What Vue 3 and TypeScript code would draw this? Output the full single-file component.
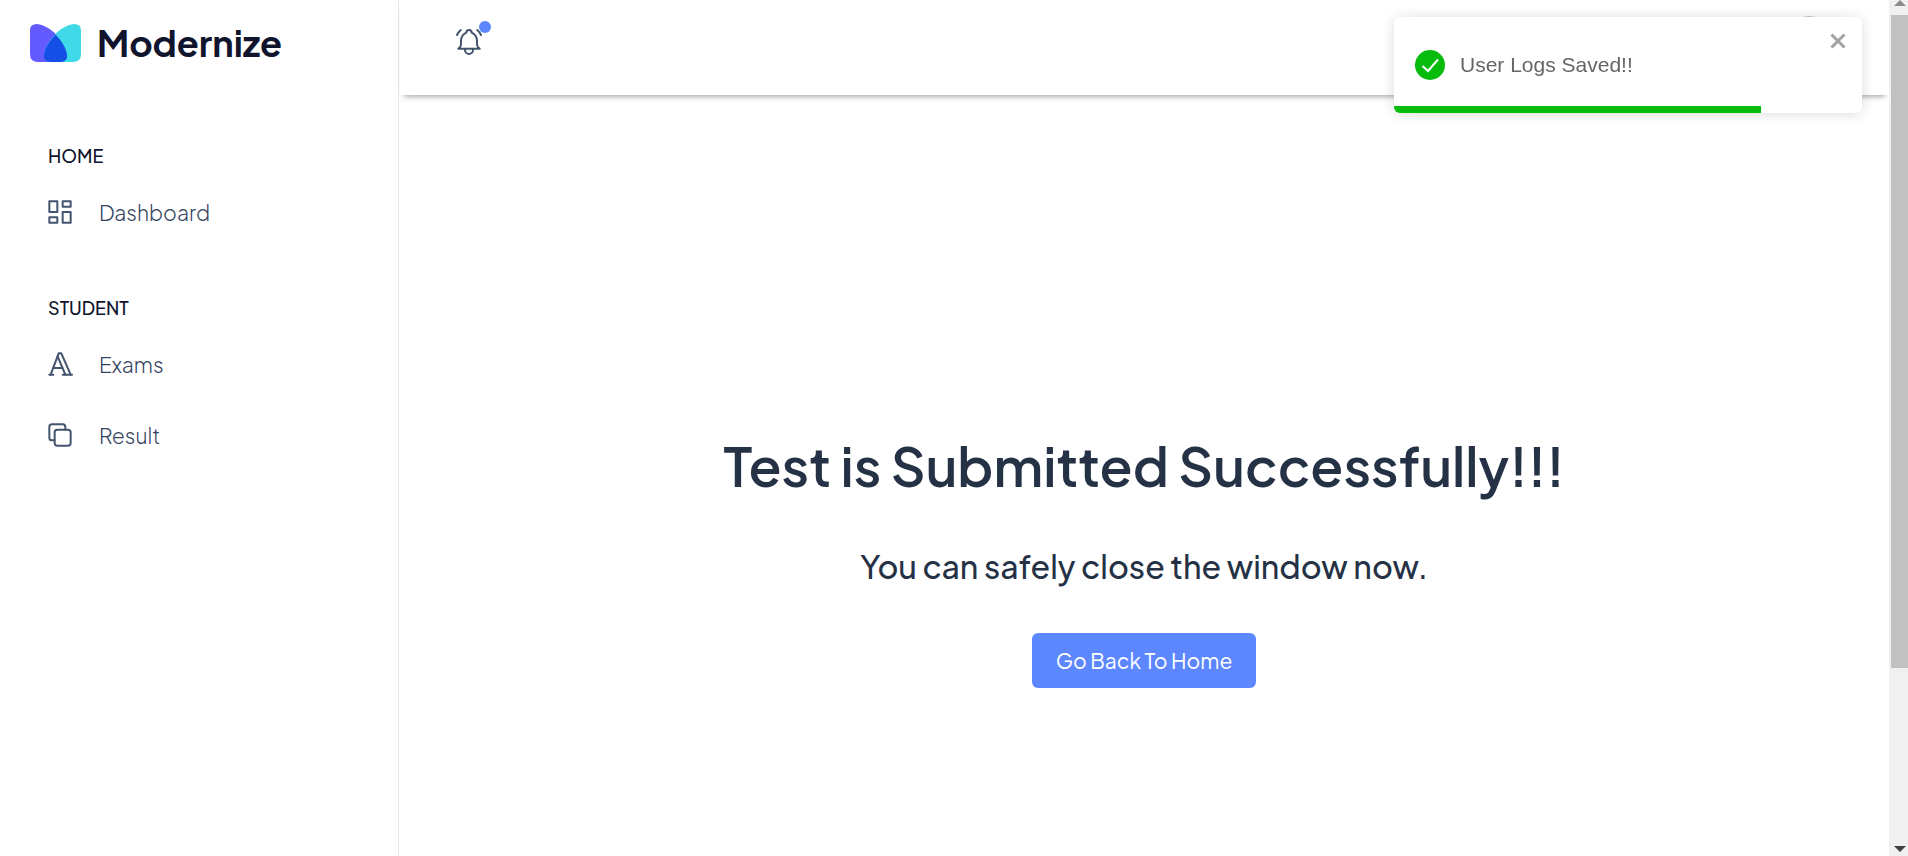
<script setup lang="ts">
import { ref } from 'vue'

interface NavItem {
  label: string
  paths: string[]
}

interface NavGroup {
  title: string
  items: NavItem[]
}

const groups: NavGroup[] = [
  {
    title: 'HOME',
    items: [
      {
        label: 'Dashboard',
        paths: ['M4 4h6v8h-6z', 'M4 16h6v4h-6z', 'M14 12h6v8h-6z', 'M14 4h6v4h-6z'],
      },
    ],
  },
  {
    title: 'STUDENT',
    items: [
      {
        label: 'Exams',
        paths: ['M4 20h3', 'M14 20h7', 'M6.9 15h6.9', 'M10.2 6.3l5.8 13.7', 'M5 20l6 -16h2l7 16'],
      },
      {
        label: 'Result',
        paths: [
          'M10 8h8a2 2 0 0 1 2 2v8a2 2 0 0 1 -2 2h-8a2 2 0 0 1 -2 -2v-8a2 2 0 0 1 2 -2z',
          'M16 8v-2a2 2 0 0 0 -2 -2h-8a2 2 0 0 0 -2 2v8a2 2 0 0 0 2 2h2',
        ],
      },
    ],
  },
]

const toastOpen = ref(true)
const toastProgress = ref(78.4)
</script>

<template>
  <div class="shell">
    <aside class="sidebar">
      <a href="#" class="brand">
        <svg class="brand-mark" viewBox="0 0 51 38" aria-hidden="true">
          <path d="M0 6Q0 0 7 0C22 2 34 17 37 30Q38 38 30 38H8Q0 38 0 30Z" fill="#635bff" />
          <path d="M51 6Q51 0 44 0C29 2 17 17 14 30Q13 38 21 38H43Q51 38 51 30Z" fill="#3fd9e8" />
          <path d="M25.500 10.500C31 16 35.500 23 37 30Q38 38 30 38H21Q13 38 14 30C15.500 23 20 16 25.500 10.500Z" fill="#154fe6" />
        </svg>
        <span class="brand-name">Modernize</span>
      </a>
      <nav class="nav">
        <section v-for="group in groups" :key="group.title" class="group">
          <h2 class="group-title">{{ group.title }}</h2>
          <a v-for="item in group.items" :key="item.label" href="#" class="nav-link">
            <svg class="icon" viewBox="0 0 24 24" aria-hidden="true">
              <path v-for="d in item.paths" :key="d" :d="d" />
            </svg>
            <span>{{ item.label }}</span>
          </a>
        </section>
      </nav>
    </aside>

    <div class="page">
      <header class="topbar">
        <button type="button" class="bell" aria-label="Notifications">
          <svg class="icon" viewBox="0 0 24 24" aria-hidden="true">
            <path d="M10 5a2 2 0 0 1 4 0a7 7 0 0 1 4 6v3a4 4 0 0 0 2 3h-16a4 4 0 0 0 2 -3v-3a7 7 0 0 1 4 -6" />
            <path d="M9 17v1a3 3 0 0 0 6 0v-1" />
            <path d="M21 6.727a11.050 11.050 0 0 0 -2.794 -3.727" />
            <path d="M3 6.727a11.050 11.050 0 0 1 2.792 -3.727" />
          </svg>
          <span class="badge"></span>
        </button>
        <button type="button" class="avatar" aria-label="Account"></button>
      </header>
      <main class="content">
        <h1 class="title">Test is Submitted Successfully!!!</h1>
        <p class="subtitle">You can safely close the window now.</p>
        <button type="button" class="primary">Go Back To Home</button>
      </main>
    </div>

    <div class="scrollbar" aria-hidden="true">
      <svg class="arrow arrow-up" viewBox="0 0 12 6"><path d="M0 6L6 0L12 6Z" /></svg>
      <div class="thumb"></div>
      <div class="track"></div>
      <svg class="arrow arrow-down" viewBox="0 0 12 6"><path d="M0 0L6 6L12 0Z" /></svg>
    </div>

    <div v-if="toastOpen" class="toast" role="alert">
      <div class="toast-body">
        <svg class="toast-icon" viewBox="0 0 30 30" aria-hidden="true">
          <circle cx="15" cy="15" r="15" fill="#07bc0c" />
          <path d="M7.500 16L13 21L23 9.500" fill="none" stroke="#fff" stroke-width="2" />
        </svg>
        <span>User Logs Saved!!</span>
      </div>
      <button type="button" class="toast-close" aria-label="Close" @click="toastOpen = false">
        <svg viewBox="0 0 16 16" aria-hidden="true">
          <path d="M1.500 1.500L14.500 14.500M14.500 1.500L1.500 14.500" fill="none" stroke="#a3a3a3" stroke-width="3" />
        </svg>
      </button>
      <div class="toast-progress" :style="{ width: toastProgress + '%' }"></div>
    </div>
  </div>
</template>

<style>
body {
  margin: 0;
  background: #fff;
}
</style>

<style scoped>
.shell {
  display: grid;
  grid-template-columns: 399px minmax(0, 1fr) 19px;
  min-height: 100vh;
  background: #fff;
  color: #253246;
  font-family: "Plus Jakarta Sans", Inter, "Liberation Sans", sans-serif;
}

.shell * {
  box-sizing: border-box;
}

button {
  border: 0;
  padding: 0;
  background: none;
  font: inherit;
  cursor: pointer;
}

a {
  color: inherit;
  text-decoration: none;
}

.sidebar {
  border-right: 1px solid #e5eaef;
}

.brand {
  display: flex;
  align-items: center;
  gap: 16px;
  padding: 19px 30px 0;
}

.brand-mark {
  width: 51px;
  height: 38px;
}

.brand-name {
  color: #11142d;
  font-size: 36px;
  font-weight: 700;
  line-height: 48px;
}

.nav {
  padding: 73px 44px 0;
}

.group {
  margin-bottom: 52px;
}

.group-title {
  margin: 0 0 12px;
  padding-left: 4px;
  color: #11142d;
  font-size: 18px;
  font-weight: 500;
  line-height: 32px;
}

.nav-link {
  display: flex;
  align-items: center;
  gap: 23px;
  height: 56px;
  color: #34445f;
  font-size: 21px;
  font-weight: 300;
}

.nav-link + .nav-link {
  margin-top: 15px;
}

.icon {
  display: block;
  width: 32px;
  height: 32px;
  fill: none;
  stroke: #44546e;
  stroke-width: 1.5;
  stroke-linecap: round;
  stroke-linejoin: round;
}

.page {
  display: flex;
  flex-direction: column;
}

.topbar {
  display: flex;
  align-items: center;
  justify-content: space-between;
  height: 95px;
  margin-left: 1px;
  padding: 0 57px 11px 53px;
  background: #fff;
  box-shadow: 0 5px 6px -4px rgba(0, 0, 0, 0.42);
}

.bell {
  position: relative;
}

.badge {
  position: absolute;
  top: -5px;
  right: -6px;
  width: 12px;
  height: 12px;
  border-radius: 50%;
  background: #5d87ff;
}

.avatar {
  width: 46px;
  height: 52px;
  border-radius: 50%;
  background: #c8c8c8;
}

.content {
  display: flex;
  flex-direction: column;
  align-items: center;
  padding-top: 330px;
  text-align: center;
}

.title {
  margin: 0;
  font-size: 54px;
  font-weight: 600;
  line-height: 80px;
}

.subtitle {
  margin: 37px 0 43px;
  font-size: 32px;
  font-weight: 500;
  line-height: 48px;
}

.primary {
  height: 55px;
  padding: 0 24px;
  border-radius: 6px;
  background: #5d87ff;
  color: #fff;
  font-size: 21px;
}

.scrollbar {
  display: flex;
  flex-direction: column;
  align-items: center;
  padding-left: 2px;
  background: #f0f0f0;
}

.arrow {
  width: 12px;
  height: 6px;
}

.arrow-up {
  margin-bottom: 9px;
  fill: #8b8b8b;
}

.arrow-down {
  margin-bottom: 4px;
  fill: #404040;
}

.thumb {
  flex: 653 0 0;
  width: 100%;
  background: #c1c1c1;
}

.track {
  flex: 178 0 0;
}

.toast {
  position: fixed;
  top: 17px;
  right: 46px;
  width: 468px;
  height: 96px;
  overflow: hidden;
  border-radius: 6px;
  background: #fff;
  box-shadow: 0 1px 14px rgba(0, 0, 0, 0.14);
  color: #666;
  font-family: "Liberation Sans", Arial, sans-serif;
  font-size: 21px;
}

.toast-body {
  display: flex;
  align-items: center;
  gap: 15px;
  height: 100%;
  padding: 0 21px;
}

.toast-icon {
  width: 30px;
  height: 30px;
}

.toast-close {
  position: absolute;
  top: 16px;
  right: 16px;
  width: 16px;
  height: 16px;
}

.toast-close svg {
  display: block;
}

.toast-progress {
  position: absolute;
  bottom: 0;
  left: 0;
  height: 7px;
  background: #07bc0c;
}
</style>
